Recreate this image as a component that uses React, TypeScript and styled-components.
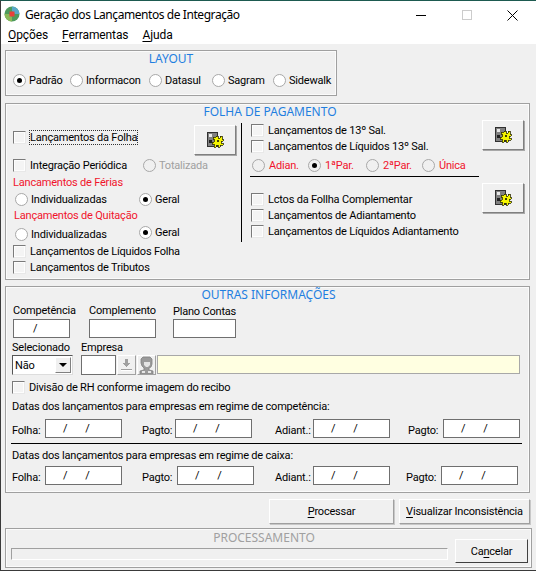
import React from 'react'
import styled, { createGlobalStyle } from 'styled-components'

const App: React.FC = () => {
  return (
    <Window>
      <GlobalStyle />
      <TitleBar>
        <AppIcon />
        <TitleText>Geração dos Lançamentos de Integração</TitleText>
        <WinButton><MinIcon /></WinButton>
        <WinButton><MaxIcon /></WinButton>
        <WinButton><CloseIcon /></WinButton>
      </TitleBar>
      <MenuBar>
        <MenuItem><u>O</u>pções</MenuItem>
        <MenuItem><u>F</u>erramentas</MenuItem>
        <MenuItem><u>A</u>juda</MenuItem>
      </MenuBar>

      <Body>
        <LayoutPanel>
          <PanelTitle>LAYOUT</PanelTitle>
          <LayoutRow>
            <Radio checked label="Padrão" />
            <Radio label="Informacon" />
            <Radio label="Datasul" />
            <Radio label="Sagram" />
            <Radio label="Sidewalk" />
          </LayoutRow>
        </LayoutPanel>

        <FolhaPanel>
          <PanelTitle $shift={3}>FOLHA DE PAGAMENTO</PanelTitle>
          <FolhaColumns>
            <LeftColumn>
              <FirstRow>
                <FirstCheck>
                  <Check label={<Focused>Lançamentos da Folha</Focused>} />
                </FirstCheck>
                <GearButton />
              </FirstRow>
              <PeriodicRow>
                <Check label="Integração Periódica" />
                <Radio disabled label="Totalizada" />
              </PeriodicRow>
              <RedTitle>Lancamentos de Férias</RedTitle>
              <ChoiceRow>
                <Radio label="Individualizadas" />
                <Radio checked label="Geral" />
              </ChoiceRow>
              <RedTitle $indent={1}>Lançamentos de Quitação</RedTitle>
              <ChoiceRow>
                <LowOption><Radio label="Individualizadas" /></LowOption>
                <Radio checked label="Geral" />
              </ChoiceRow>
              <Row $h={20}><Check label="Lançamentos de Líquidos Folha" /></Row>
              <Row $h={12}><Check label="Lançamentos de Tributos" /></Row>
            </LeftColumn>
            <RightColumn>
              <RightTop>
                <RightList $offset={-2}>
                  <RightRow $h={16}><Check label="Lançamentos de 13º Sal." /></RightRow>
                  <RightRow $h={17}><Check label="Lançamentos de Líquidos 13º Sal." /></RightRow>
                  <ParcelRow>
                    <Radio red label="Adian." />
                    <Radio red checked label="1ªPar." />
                    <Radio red label="2ªPar." />
                    <Radio red label="Única" />
                  </ParcelRow>
                </RightList>
                <RaisedButton><GearButton /></RaisedButton>
              </RightTop>
              <RightBottom>
                <RightList $offset={9}>
                  <RightRow $h={15}><Check label="Lctos da Follha Complementar" /></RightRow>
                  <RightRow $h={16}><Check label="Lançamentos de Adiantamento" /></RightRow>
                  <RightRow $h={16}><Check label="Lançamentos de Líquidos Adiantamento" /></RightRow>
                </RightList>
                <GearButton />
              </RightBottom>
            </RightColumn>
          </FolhaColumns>
        </FolhaPanel>

        <OutrasPanel>
          <PanelTitle $shift={2}>OUTRAS INFORMAÇÕES</PanelTitle>
          <TopFields>
            <Stacked $w={57} $gap={19}>
              <FieldLabel>Competência</FieldLabel>
              <TextBox $w={57}><Mask $left={19}>/</Mask></TextBox>
            </Stacked>
            <Stacked $w={67} $gap={17}>
              <FieldLabel>Complemento</FieldLabel>
              <TextBox $w={67} />
            </Stacked>
            <Stacked $w={63}>
              <FieldLabel $down>Plano Contas</FieldLabel>
              <TextBox $w={63} />
            </Stacked>
          </TopFields>
          <CompanyLabels>
            <FieldLabel $flat>Selecionado</FieldLabel>
            <FieldLabel $flat>Empresa</FieldLabel>
          </CompanyLabels>
          <CompanyRow>
            <Combo>
              <ComboText>Não</ComboText>
              <ComboArrow />
            </Combo>
            <TextBox $w={35} $h={20} />
            <SmallButton><DownloadIcon /></SmallButton>
            <SmallButton><PersonIcon /></SmallButton>
            <YellowField />
          </CompanyRow>
          <DivisionRow><Check label="Divisão de RH conforme imagem do recibo" /></DivisionRow>
          <DatesTitle>Datas dos lançamentos para empresas em regime de competência:</DatesTitle>
          <DateRow $top={5}>
            <DateField label="Folha:" labelWidth={33} />
            <DateField label="Pagto:" labelWidth={33} gap={20} />
            <DateField label="Adiant.:" labelWidth={38} gap={23} />
            <DateField label="Pagto:" labelWidth={35} gap={18} />
          </DateRow>
          <DatesDivider />
          <DatesTitle $top={4}>Datas dos lançamentos para empresas em regime de caixa:</DatesTitle>
          <DateRow $top={3}>
            <DateField label="Folha:" labelWidth={33} />
            <DateField label="Pagto:" labelWidth={35} gap={20} />
            <DateField label="Adiant.:" labelWidth={38} gap={21} />
            <DateField label="Pagto:" labelWidth={35} gap={16} />
          </DateRow>
        </OutrasPanel>

        <ActionRow>
          <ActionButton $w={125}><u>P</u>rocessar</ActionButton>
          <ActionButton $w={131}><u>V</u>isualizar Inconsistência</ActionButton>
        </ActionRow>

        <ProcessPanel>
          <ProcessMain>
            <ProcessTitle>PROCESSAMENTO</ProcessTitle>
            <ProgressTrack />
          </ProcessMain>
          <CancelButton>Ca<u>n</u>celar</CancelButton>
        </ProcessPanel>
      </Body>
    </Window>
  )
}

const Check: React.FC<{ label: React.ReactNode }> = ({ label }) => (
  <OptionLabel>
    <CheckBox />
    <CheckText>{label}</CheckText>
  </OptionLabel>
)

const Radio: React.FC<{
  label: string
  checked?: boolean
  disabled?: boolean
  red?: boolean
}> = ({ label, checked, disabled, red }) => (
  <OptionLabel>
    <RadioDot $checked={checked} $disabled={disabled || red} />
    <RadioText $disabled={disabled} $red={red}>{label}</RadioText>
  </OptionLabel>
)

const DateField: React.FC<{ label: string; labelWidth: number; gap?: number }> = ({
  label,
  labelWidth,
  gap = 0,
}) => (
  <DateGroup $gap={gap}>
    <DateLabel $w={labelWidth}>{label}</DateLabel>
    <TextBox $w={77}>
      <Mask $left={17}>/</Mask>
      <Mask $left={18}>/</Mask>
    </TextBox>
  </DateGroup>
)

const GearButton: React.FC = () => (
  <IconButton>
    <svg width="18" height="18" viewBox="0 0 18 18" shapeRendering="crispEdges">
      <rect x="1.5" y="1.5" width="10" height="14" fill="#808080" stroke="#303030" />
      <rect x="3" y="3" width="3" height="3" fill="#e8e8e8" />
      <rect x="3" y="9" width="3" height="3" fill="#202020" />
      <path
        d="M10 5h2v2h2V5h2v3h1v2h-2v2h2v2h-3v2h-2v-2h-2v2H8v-3H6v-2h2V8H7V6h3z"
        fill="#f5f500"
        stroke="#303000"
        strokeWidth="0.8"
      />
      <rect x="11" y="9" width="2" height="2" fill="#404000" />
    </svg>
  </IconButton>
)

const AppIcon: React.FC = () => (
  <AppIconSvg width="16" height="16" viewBox="0 0 16 16">
    <circle cx="8" cy="8" r="7.5" fill="#4d9a5c" />
    <path d="M8 .5A7.5 7.5 0 0 1 15.5 8H11L8 5z" fill="#58a8c8" />
    <path d="M.5 8A7.5 7.5 0 0 0 8 15.5V11L5 8z" fill="#8ab858" />
    <rect x="5.5" y="5.5" width="5" height="5" fill="#e8403a" />
  </AppIconSvg>
)

const MinIcon: React.FC = () => (
  <svg width="10" height="10" viewBox="0 0 10 10" shapeRendering="crispEdges">
    <rect x="0" y="5" width="10" height="1" fill="#000" />
  </svg>
)

const MaxIcon: React.FC = () => (
  <svg width="10" height="10" viewBox="0 0 10 10" shapeRendering="crispEdges">
    <rect x="0.5" y="0.5" width="9" height="9" fill="none" stroke="#cccccc" />
  </svg>
)

const CloseIcon: React.FC = () => (
  <svg width="11" height="11" viewBox="0 0 11 11">
    <path d="M.5.5l10 10M10.5.5l-10 10" stroke="#000" strokeWidth="1" fill="none" />
  </svg>
)

const DownloadIcon: React.FC = () => (
  <svg width="11" height="12" viewBox="0 0 11 12" shapeRendering="crispEdges">
    <path d="M4 0h3v4h3L5.5 8 1 4h3z" fill="#a0a0a0" />
    <rect x="0" y="10" width="11" height="1" fill="#a0a0a0" />
    <rect x="0" y="11" width="11" height="1" fill="#ffffff" />
  </svg>
)

const PersonIcon: React.FC = () => (
  <svg width="17" height="18" viewBox="0 0 17 18">
    <path
      d="M5 1h7l2 2v5l-1 3-2 1v2l4 1v3H2v-3l4-1v-2L4 10 3 7V3z"
      fill="#9a9a9a"
      stroke="#808080"
      strokeWidth="0.8"
    />
    <path d="M6 6h6v3l-2 2H8L6 9z" fill="#e4e4e4" />
    <path d="M4 15h3v2H4zM10 15h3v2h-3z" fill="#e6e6e6" />
  </svg>
)

const GlobalStyle = createGlobalStyle`
  html, body {
    margin: 0;
    padding: 0;
    background: #f0f0f0;
  }
  u {
    text-underline-offset: 2px;
  }
`

const Window = styled.div`
  width: 536px;
  height: 571px;
  box-sizing: border-box;
  display: flex;
  flex-direction: column;
  overflow: hidden;
  border-top: 1px solid #1d5a50;
  border-left: 1px solid #3a3a3a;
  border-bottom: 1px solid #3a3a3a;
  background: #f0f0f0;
  color: #000;
  font-family: Roboto, sans-serif;
  font-size: 11px;
  letter-spacing: -0.2px;
`

const TitleBar = styled.div`
  height: 28px;
  flex: none;
  display: flex;
  align-items: center;
  padding-left: 3px;
  background: #fff;
`

const AppIconSvg = styled.svg`
  flex: none;
  margin-top: -2px;
`

const TitleText = styled.div`
  flex: 1;
  margin-left: 5px;
  margin-top: -2px;
  font-family: 'Noto Sans', sans-serif;
  font-size: 12px;
  letter-spacing: -0.43px;
`

const WinButton = styled.div`
  width: 45px;
  height: 28px;
  display: flex;
  align-items: center;
  justify-content: center;
  margin-right: 1px;
`

const MenuBar = styled.div`
  height: 15px;
  flex: none;
  display: flex;
  gap: 14px;
  padding-left: 7px;
  background: #fff;
  font-size: 12px;
  letter-spacing: -0.1px;
  line-height: 12px;
`

const MenuItem = styled.div`
  white-space: nowrap;
`

const Body = styled.div`
  flex: 1;
  display: flex;
  flex-direction: column;
  padding: 6px 6px 0 4px;
`

const Panel = styled.div`
  box-sizing: border-box;
  border: 1px solid #a0a0a0;
  box-shadow: inset 0 0 0 1px #fbfbfb;
`

const LayoutPanel = styled(Panel)`
  width: 332px;
  height: 46px;
`

const FolhaPanel = styled(Panel)`
  width: 525px;
  height: 177px;
  margin-top: 7px;
  padding: 0 5px 0 7px;
`

const OutrasPanel = styled(Panel)`
  width: 525px;
  height: 207px;
  margin-top: 6px;
  padding: 0 7px;
`

const PanelTitle = styled.div<{ $shift?: number }>`
  height: 19px;
  padding-left: ${({ $shift }) => $shift ?? 0}px;
  text-align: center;
  line-height: 16px;
  font-family: 'Noto Sans', sans-serif;
  font-size: 12px;
  letter-spacing: 0;
  color: #1f7fe0;
`

const LayoutRow = styled.div`
  display: grid;
  grid-template-columns: 57px 79px 63px 61px auto;
  padding-left: 7px;
  height: 20px;
  align-items: center;
`

const OptionLabel = styled.div`
  display: flex;
  align-items: center;
  white-space: nowrap;
`

const CheckBox = styled.span`
  width: 13px;
  height: 13px;
  box-sizing: border-box;
  flex: none;
  border: 1px solid;
  border-color: #7a7a7a #e8e8e8 #e8e8e8 #7a7a7a;
  box-shadow: inset 0 0 0 1px #fdfdfd;
  background: #f4f4f4;
`

const CheckText = styled.span`
  margin-left: 4px;
`

const RadioDot = styled.span<{ $checked?: boolean; $disabled?: boolean }>`
  width: 13px;
  height: 13px;
  box-sizing: border-box;
  flex: none;
  display: flex;
  align-items: center;
  justify-content: center;
  border-radius: 50%;
  border: 1px solid #a8a8a8;
  background: ${({ $disabled }) => ($disabled ? '#f0f0f0' : '#fff')};
  &::after {
    content: '';
    width: 5px;
    height: 5px;
    border-radius: 50%;
    background: ${({ $checked }) => ($checked ? '#000' : 'transparent')};
  }
`

const RadioText = styled.span<{ $disabled?: boolean; $red?: boolean }>`
  margin-left: ${({ $red }) => ($red ? 4 : 3)}px;
  color: ${({ $disabled, $red }) => ($disabled ? '#a0a0a0' : $red ? '#f0142c' : '#000')};
`

const FolhaColumns = styled.div`
  display: flex;
  height: 119px;
`

const LeftColumn = styled.div`
  width: 229px;
  height: 119px;
  flex: none;
  box-sizing: border-box;
  padding-top: 1px;
  border-right: 1px solid #000;
`

const FirstRow = styled.div`
  height: 32px;
  width: 223px;
  display: flex;
  align-items: flex-start;
  justify-content: space-between;
  padding-top: 1px;
  box-sizing: border-box;
`

const FirstCheck = styled.div`
  margin-top: 6px;
`

const Row = styled.div<{ $h: number }>`
  display: flex;
  align-items: center;
  height: ${({ $h }) => $h}px;
`

const PeriodicRow = styled.div`
  display: grid;
  grid-template-columns: 130px auto;
  align-items: center;
  height: 19px;
`

const Focused = styled.span`
  outline: 1px dotted #333;
`

const RedTitle = styled.div<{ $indent?: number }>`
  color: #f0142c;
  height: 16px;
  line-height: 16px;
  margin-left: ${({ $indent }) => $indent ?? 0}px;
`

const ChoiceRow = styled.div`
  display: grid;
  grid-template-columns: 124px auto;
  height: 17px;
  align-items: center;
  padding-left: 2px;
`

const LowOption = styled.div`
  margin-top: 3px;
`

const RightColumn = styled.div`
  flex: 1;
  padding: 1px 0 0 8px;
`

const RightTop = styled.div`
  display: flex;
  justify-content: space-between;
  height: 53px;
`

const RightList = styled.div<{ $offset: number }>`
  display: flex;
  flex-direction: column;
  width: 229px;
  margin-top: ${({ $offset }) => $offset}px;
`

const RightRow = styled(Row)`
  padding-left: 1px;
`

const RaisedButton = styled.div`
  margin-top: -4px;
`

const ParcelRow = styled.div`
  display: grid;
  grid-template-columns: 56px 58px 56px auto;
  height: 21px;
  padding-left: 2px;
  align-items: center;
  border-bottom: 1px solid #000;
`

const RightBottom = styled.div`
  display: flex;
  justify-content: space-between;
  margin-top: 6px;
`

const IconButton = styled.button`
  width: 42px;
  height: 30px;
  padding: 0;
  flex: none;
  display: flex;
  align-items: center;
  justify-content: center;
  background: #f0f0f0;
  border: 1px solid;
  border-color: #fff #7f7f7f #7f7f7f #fff;
  box-shadow: 1px 1px 0 #a8a8a8;
`

const TopFields = styled.div`
  display: flex;
  height: 35px;
  margin-top: -3px;
`

const Stacked = styled.div<{ $w: number; $gap?: number }>`
  width: ${({ $w }) => $w}px;
  margin-right: ${({ $gap }) => $gap ?? 0}px;
  display: flex;
  flex-direction: column;
  justify-content: flex-end;
`

const FieldLabel = styled.div<{ $down?: boolean; $flat?: boolean }>`
  white-space: nowrap;
  line-height: 14px;
  margin-bottom: ${({ $down, $flat }) => ($down || $flat ? 0 : 1)}px;
`

const TextBox = styled.div<{ $w: number; $h?: number }>`
  width: ${({ $w }) => $w}px;
  height: ${({ $h }) => $h ?? 19}px;
  box-sizing: border-box;
  flex: none;
  display: flex;
  align-items: center;
  border: 1px solid #6f6f6f;
  background: #fff;
  overflow: hidden;
`

const Mask = styled.span<{ $left: number }>`
  margin-left: ${({ $left }) => $left}px;
  font-size: 11px;
`

const CompanyLabels = styled.div`
  display: grid;
  grid-template-columns: 69px auto;
  height: 14px;
  margin: 3px 0 0 -1px;
`

const CompanyRow = styled.div`
  display: flex;
  height: 20px;
  margin-left: -1px;
`

const Combo = styled.div`
  width: 61px;
  height: 20px;
  box-sizing: border-box;
  margin-right: 8px;
  display: flex;
  align-items: center;
  border: 1px solid #555;
  border-bottom-color: #ddd;
  border-right-color: #ddd;
  background: #fff;
`

const ComboText = styled.span`
  flex: 1;
  padding-left: 2px;
`

const ComboArrow = styled.span`
  width: 16px;
  height: 16px;
  flex: none;
  margin-right: 1px;
  display: flex;
  align-items: center;
  justify-content: center;
  background: #f0f0f0;
  border: 1px solid;
  border-color: #fff #808080 #808080 #fff;
  box-sizing: border-box;
  &::after {
    content: '';
    border-left: 4px solid transparent;
    border-right: 4px solid transparent;
    border-top: 4px solid #000;
  }
`

const SmallButton = styled.button`
  width: 19px;
  height: 20px;
  margin-left: 1px;
  padding: 0;
  flex: none;
  display: flex;
  align-items: center;
  justify-content: center;
  background: #f0f0f0;
  border: 1px solid;
  border-color: #fff #a0a0a0 #a0a0a0 #fff;
`

const YellowField = styled.div`
  flex: 1;
  height: 19px;
  box-sizing: border-box;
  margin-left: 1px;
  margin-right: 2px;
  border: 1px solid #a8a8a8;
  background: #ffffe1;
`

const DivisionRow = styled.div`
  display: flex;
  align-items: center;
  height: 24px;
  margin-left: -1px;
`

const DatesTitle = styled.div<{ $top?: number }>`
  white-space: nowrap;
  height: 15px;
  line-height: 15px;
  margin: ${({ $top }) => $top ?? 0}px 0 0 -1px;
`

const DateRow = styled.div<{ $top: number }>`
  display: flex;
  height: 19px;
  margin: ${({ $top }) => $top}px 0 0 -1px;
`

const DateGroup = styled.div<{ $gap: number }>`
  display: flex;
  align-items: flex-end;
  margin-left: ${({ $gap }) => $gap}px;
`

const DateLabel = styled.div<{ $w: number }>`
  width: ${({ $w }) => $w}px;
  line-height: 15px;
  white-space: nowrap;
`

const DatesDivider = styled.div`
  height: 1px;
  margin: 5px 0 0 -2px;
  background: #000;
`

const ActionRow = styled.div`
  display: flex;
  justify-content: flex-end;
  gap: 5px;
  margin-top: 6px;
  height: 25px;
`

const ActionButton = styled.button<{ $w: number }>`
  width: ${({ $w }) => $w}px;
  height: 25px;
  padding: 0;
  font: inherit;
  letter-spacing: inherit;
  white-space: nowrap;
  background: #f0f0f0;
  border: 1px solid;
  border-color: #fff #a0a0a0 #a0a0a0 #fff;
  box-shadow: 1px 1px 0 #c8c8c8;
`

const ProcessPanel = styled(Panel)`
  width: 527px;
  height: 40px;
  margin-top: 4px;
  display: flex;
  padding: 0 3px 0 5px;
`

const ProcessMain = styled.div`
  flex: 1;
`

const ProcessTitle = styled.div`
  padding-left: 62px;
  text-align: center;
  font-family: 'Noto Sans', sans-serif;
  font-size: 12px;
  letter-spacing: 0;
  color: #a0a0a0;
  height: 19px;
  line-height: 18px;
`

const ProgressTrack = styled.div`
  width: 437px;
  height: 12px;
  box-sizing: border-box;
  border: 1px solid;
  border-color: #a0a0a0 #fff #fff #a0a0a0;
`

const CancelButton = styled.button`
  width: 73px;
  height: 24px;
  margin-top: 10px;
  padding: 0;
  font: inherit;
  letter-spacing: inherit;
  flex: none;
  background: #f0f0f0;
  border: 1px solid;
  border-color: #fff #404040 #404040 #fff;
`

export default App
